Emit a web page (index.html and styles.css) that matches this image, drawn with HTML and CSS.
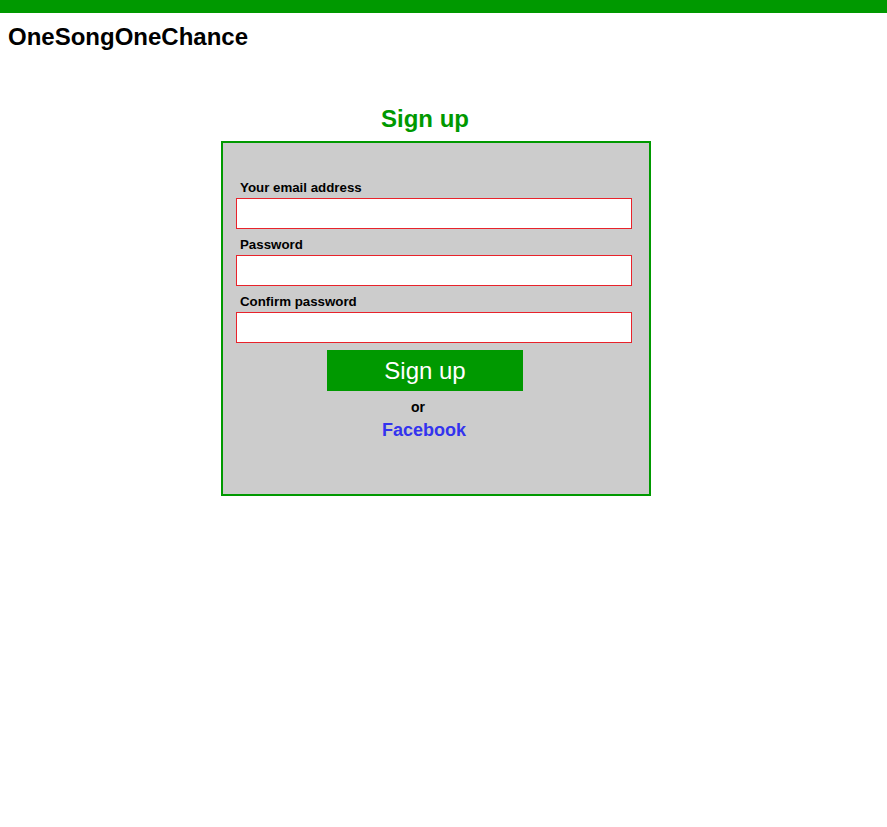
FILE: index.html
```html
<!DOCTYPE html>
<html>
<head>
<meta charset="utf-8">
<title>OneSongOneChance - Sign up</title>
<link rel="stylesheet" href="styles.css">
</head>
<body>
<div class="topbar"></div>
<div class="brand">OneSongOneChance</div>
<main class="main">
  <h2 class="heading">Sign up</h2>
  <form class="box">
    <label class="label" for="email">Your email address</label>
    <input class="field" id="email" type="text">
    <label class="label" for="pw">Password</label>
    <input class="field" id="pw" type="password">
    <label class="label" for="pw2">Confirm password</label>
    <input class="field" id="pw2" type="password">
    <button class="btn" type="button">Sign up</button>
    <div class="or">or</div>
    <a class="fb" href="#">Facebook</a>
  </form>
</main>
</body>
</html>
```
FILE: styles.css
```css
html, body {
  margin: 0;
  padding: 0;
  background: #fff;
  font-family: "Liberation Sans", Arial, sans-serif;
  color: #000;
}
.topbar {
  height: 13px;
  background: #009900;
}
.brand {
  margin: 10px 0 0 8px;
  font-size: 24px;
  font-weight: bold;
  line-height: 28px;
}
.main {
  width: 430px;
  margin: 54px 0 0 221px;
}
.heading {
  margin: 0 0 8px 0;
  padding-right: 22px;
  text-align: center;
  color: #009900;
  font-size: 24px;
  line-height: 28px;
  font-weight: bold;
}
.box {
  box-sizing: border-box;
  height: 355px;
  border: 2px solid #009900;
  background: #cccccc;
  padding: 36px 17px 0 13px;
  display: flex;
  flex-direction: column;
  align-items: flex-start;
}
.label {
  display: block;
  margin-left: 4px;
  font-size: 13.3px;
  line-height: 17px;
  font-weight: bold;
}
.field {
  box-sizing: border-box;
  width: 396px;
  height: 31px;
  margin: 2px 0 7px 0;
  border: 1px solid #e8232b;
  background: #fff;
  padding: 0 4px;
  outline: none;
}
.btn {
  align-self: flex-start;
  margin: 0 0 0 91px;
  width: 196px;
  height: 41px;
  border: none;
  background: #009900;
  color: #fff;
  font-family: "Liberation Sans", Arial, sans-serif;
  font-size: 24px;
  padding: 0;
}
.or {
  margin: 8px 0 0 175px;
  font-size: 14px;
  font-weight: bold;
  line-height: 16px;
}
.fb {
  margin: 4px 0 0 146px;
  font-size: 18px;
  font-weight: bold;
  line-height: 22px;
  color: #3333ee;
  text-decoration: none;
}
```
